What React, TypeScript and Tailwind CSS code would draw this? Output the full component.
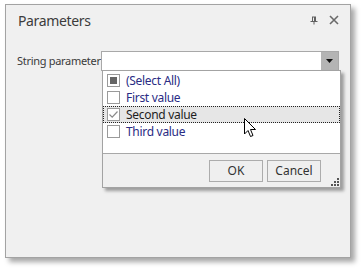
import React from 'react';

const items = [
  { label: '(Select All)', state: 'partial' },
  { label: 'First value', state: 'off' },
  { label: 'Second value', state: 'on', focused: true },
  { label: 'Third value', state: 'off' },
];

function Check({ state }: { state: string }) {
  return (
    <span className="w-[13px] h-[13px] border border-[#9a9a9a] bg-white flex items-center justify-center shrink-0">
      {state === 'partial' && <span className="w-[7px] h-[7px] bg-[#666666]" />}
      {state === 'on' && (
        <svg width="11" height="11" viewBox="0 0 11 11">
          <path d="M1.5 5.5 L4.2 8.2 L9.5 2.5" fill="none" stroke="#8a8a8a" strokeWidth="1.2" />
        </svg>
      )}
    </span>
  );
}

export default function App() {
  return (
    <div className="w-[363px] h-[270px] bg-white pt-[4px] pl-[5px] font-['Noto_Sans',sans-serif]">
      <div className="w-[346px] h-[254px] border border-[#a3a3a3] bg-[#f0f0f0] shadow-[4px_4px_5px_rgba(0,0,0,0.35)] flex flex-col">
        {/* Header */}
        <div className="h-[30px] flex items-center justify-between pl-[12px] pr-[11px]">
          <span className="text-[14px] text-[#3c3c3c] tracking-[-0.35px]">Parameters</span>
          <div className="flex items-center gap-[11px]">
            <svg width="8" height="9" viewBox="0 0 8 9">
              <path d="M2 0.5 H6 V5 H7.5 V6 H4.5 V8.5 H3.5 V6 H0.5 V5 H2 Z M3 1.5 V5 H4 V1.5 Z" fill="#606060" />
            </svg>
            <svg width="10" height="10" viewBox="0 0 10 10">
              <path d="M1 1 L9 9 M9 1 L1 9" stroke="#6a6a6a" strokeWidth="1.6" />
            </svg>
          </div>
        </div>

        {/* Parameter row */}
        <div className="mt-[16px] flex items-center pl-[11px] pr-[11px]">
          <span className="w-[84px] shrink-0 whitespace-nowrap text-[11px] tracking-[-0.3px] text-[#3a3a3a]">
            String parameter
          </span>
          <div className="relative flex-1 h-[20px] border border-[#a8a8a8] bg-white flex justify-end">
            <div className="w-[17px] h-full bg-[#b4b4b4] flex items-center justify-center">
              <svg width="7" height="4" viewBox="0 0 7 4">
                <path d="M0 0 H7 L3.5 4 Z" fill="#111" />
              </svg>
            </div>

            {/* Dropdown popup */}
            <div className="absolute left-[0px] top-[18px] w-[239px] h-[118px] border border-[#a3a3a3] bg-white shadow-[3px_3px_3px_rgba(0,0,0,0.35)] flex flex-col z-10">
              <div className="flex-1 bg-white pt-[1px]">
                {items.map((it) => (
                  <div
                    key={it.label}
                    className={
                      it.focused
                        ? 'h-[17px] flex items-center pl-[3px] gap-[6px] bg-[#e6e6e6] border border-dotted border-[#222]'
                        : 'h-[17px] flex items-center pl-[3px] gap-[6px] border border-transparent'
                    }
                  >
                    <Check state={it.state} />
                    <span
                      className={
                        it.focused
                          ? 'text-[12px] tracking-[-0.3px] text-[#1e1e1e]'
                          : 'text-[12px] tracking-[-0.3px] text-[#2a2c84]'
                      }
                    >
                      {it.label}
                    </span>
                  </div>
                ))}
              </div>
              <div className="relative h-[34px] border-t border-[#a8a8a8] bg-[#f0f0f0] flex justify-end items-start pt-[6px] pr-[19px] gap-[4px]">
                <button className="w-[54px] h-[22px] border border-[#acacac] bg-[#efefef] text-[12px] text-[#333] leading-none">
                  OK
                </button>
                <button className="w-[54px] h-[22px] border border-[#acacac] bg-[#efefef] text-[12px] text-[#333] leading-none">
                  Cancel
                </button>
                <svg className="absolute right-[1px] bottom-[1px]" width="8" height="8" viewBox="0 0 8 8">
                  <rect x="6" y="0" width="2" height="2" fill="#555" />
                  <rect x="3" y="3" width="2" height="2" fill="#555" />
                  <rect x="6" y="3" width="2" height="2" fill="#555" />
                  <rect x="0" y="6" width="2" height="2" fill="#555" />
                  <rect x="3" y="6" width="2" height="2" fill="#555" />
                  <rect x="6" y="6" width="2" height="2" fill="#555" />
                </svg>
              </div>

              {/* Mouse cursor */}
              <svg className="absolute left-[141px] top-[47px]" width="13" height="20" viewBox="0 0 13 20">
                <path
                  d="M0.5 0.5 V16 L4 12.5 L6.5 18.5 L9 17.5 L6.5 11.5 H11.5 Z"
                  fill="#fff"
                  stroke="#000"
                  strokeWidth="1"
                  strokeLinejoin="miter"
                />
              </svg>
            </div>
          </div>
        </div>
      </div>
    </div>
  );
}
